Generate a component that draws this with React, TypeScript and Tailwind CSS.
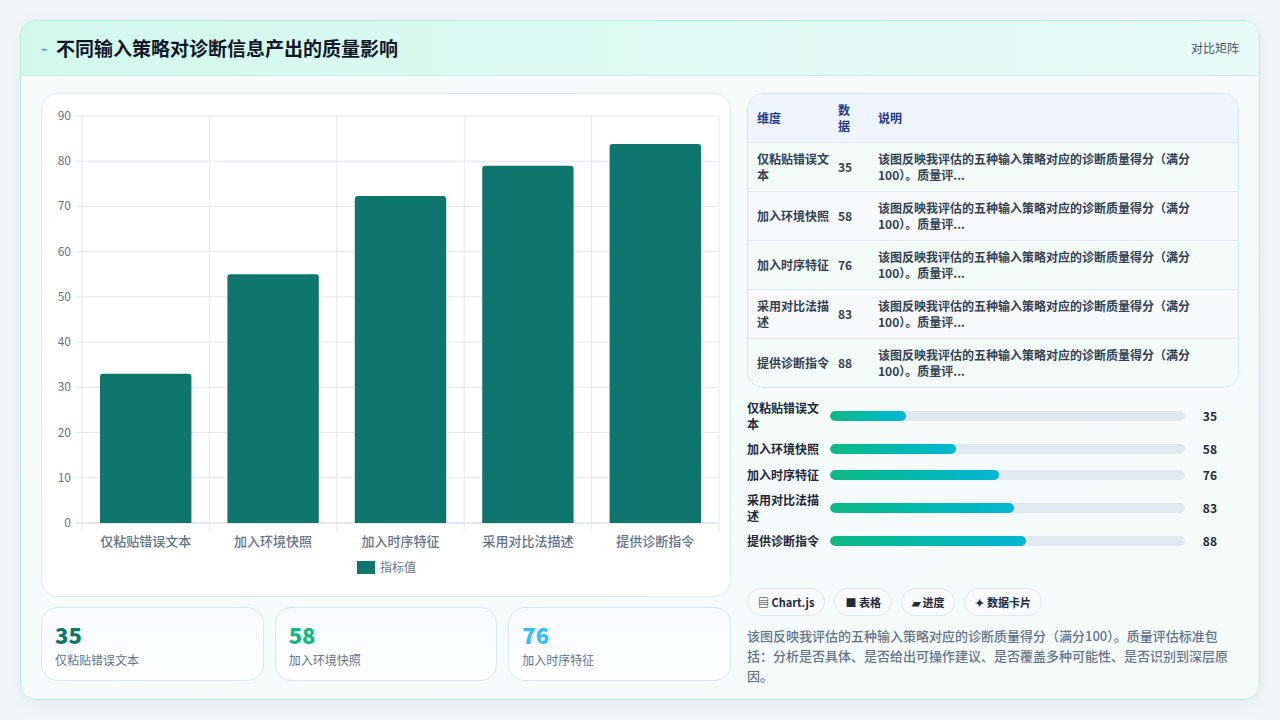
const font = { fontFamily: '"Noto Sans CJK SC", "Noto Sans", sans-serif' };

const bars = [
  { name: "仅粘贴错误文本", v: 35, h: 33, pct: 21.5 },
  { name: "加入环境快照", v: 58, h: 55, pct: 35.5 },
  { name: "加入时序特征", v: 76, h: 72.3, pct: 47.6 },
  { name: "采用对比法描述", v: 83, h: 79, pct: 51.9 },
  { name: "提供诊断指令", v: 88, h: 83.8, pct: 55.1 },
];

const rowNames = ["仅粘贴错误文\n本", "加入环境快照", "加入时序特征", "采用对比法描\n述", "提供诊断指令"];

function Chart() {
  const x0 = 40, x1 = 677, yTop = 22, yBot = 429;
  const sy = (yBot - yTop) / 90;
  const cw = (x1 - x0) / 5;
  return (
    <svg width="689" height="503" className="block">
      {[0, 10, 20, 30, 40, 50, 60, 70, 80, 90].map((t) => {
        const y = yBot - t * sy;
        return (
          <g key={t}>
            <line x1={x0 - 6} x2={x1} y1={y} y2={y} stroke={t === 0 ? "#cbd5e1" : "#e5e7eb"} />
            <text x={29} y={y + 4} textAnchor="end" fontSize="12" fill="#6b7280" style={font}>{t}</text>
          </g>
        );
      })}
      {[0, 1, 2, 3, 4, 5].map((i) => (
        <line key={i} x1={x0 + i * cw} x2={x0 + i * cw} y1={yTop} y2={yBot + 8} stroke="#e5e7eb" />
      ))}
      {bars.map((b, i) => {
        const bx = x0 + i * cw + 18;
        const y = yBot - b.h * sy;
        return (
          <g key={b.name}>
            <path d={`M${bx} ${yBot} V${y + 3} Q${bx} ${y} ${bx + 3} ${y} H${bx + cw - 39} Q${bx + cw - 36} ${y} ${bx + cw - 36} ${y + 3} V${yBot} Z`} fill="#0f766e" />
            <text x={x0 + i * cw + cw / 2} y={452} textAnchor="middle" fontSize="13" fill="#64748b" fontWeight="500" style={font}>{b.name}</text>
          </g>
        );
      })}
      <rect x={315} y={467} width={18} height={13} fill="#0f766e" />
      <text x={338} y={478} fontSize="12" fill="#64748b" style={font}>指标值</text>
    </svg>
  );
}

export default function App() {
  return (
    <div className="w-[1280px] h-[720px] bg-[#f3f6f8] p-5" style={font}>
      <div className="h-[680px] rounded-2xl border border-[#b8eedd] bg-gradient-to-br from-[#f7fcfb] to-[#f4fbf9] overflow-hidden flex flex-col shadow-[0_4px_16px_rgba(15,118,110,0.08)]">
        <div className="h-[55px] shrink-0 flex items-center justify-between px-5 bg-gradient-to-r from-[#d2f8ec] to-[#e8fbf6] border-b border-[#c9f0e4]">
          <div className="flex items-center gap-2">
            <span className="text-[11px] text-[#3b82f6]">⌁</span>
            <h1 className="text-[19px] font-bold text-[#0f172a]">不同输入策略对诊断信息产出的质量影响</h1>
          </div>
          <span className="text-[12px] text-[#475569]">对比矩阵</span>
        </div>
        <div className="flex gap-4 px-5 pt-[17px]">
          <div className="w-[690px] flex flex-col gap-[10px]">
            <div className="h-[504px] rounded-2xl border border-[#e2e8f0] bg-white overflow-hidden">
              <Chart />
            </div>
            <div className="flex gap-[11px]">
              {[
                { v: "35", n: "仅粘贴错误文本", c: "text-[#0f766e]" },
                { v: "58", n: "加入环境快照", c: "text-[#10b981]" },
                { v: "76", n: "加入时序特征", c: "text-[#38bdf8]" },
              ].map((s) => (
                <div key={s.v} className="flex-1 h-[74px] rounded-2xl border border-[#dbe6f3] bg-gradient-to-b from-[#f7faff] to-white px-[13px] pt-[12px]">
                  <div className={`text-[22px] font-extrabold leading-[28px] ${s.c}`}>{s.v}</div>
                  <div className="text-[12px] text-[#64748b] mt-[3px]">{s.n}</div>
                </div>
              ))}
            </div>
          </div>
          <div className="flex-1 flex flex-col">
            <div className="rounded-2xl border border-[#d6e2ef] overflow-hidden bg-white">
              <table className="w-full text-[12px] border-collapse">
                <thead>
                  <tr className="bg-[#eef5ff] h-[48px] text-[#1e3a8a] font-bold text-left">
                    <th className="pl-[9px] w-[90px] font-bold">维度</th>
                    <th className="w-[40px] font-bold leading-[16px]">数<br />据</th>
                    <th className="font-bold">说明</th>
                  </tr>
                </thead>
                <tbody>
                  {bars.map((b, i) => (
                    <tr key={b.name} className={`h-[49px] border-t border-[#e2e8f0] font-semibold text-[#334155] leading-[16px] ${i % 2 === 0 ? "bg-[#f3fbf8]" : "bg-[#f8fafc]"}`}>
                      <td className="pl-[9px] pr-1 whitespace-pre-line">{rowNames[i]}</td>
                      <td>{b.v}</td>
                      <td className="pr-4">该图反映我评估的五种输入策略对应的诊断质量得分（满分100）。质量评...</td>
                    </tr>
                  ))}
                </tbody>
              </table>
            </div>
            <div className="mt-[12px] flex flex-col gap-[8px] w-[470px]">
              {bars.map((b, i) => (
                <div key={b.name} className="flex items-center gap-2 min-h-[16px]">
                  <div className="w-[75px] text-[12px] font-semibold text-[#1e293b] leading-[16px] whitespace-pre-line">{rowNames[i]}</div>
                  <div className="flex-1 h-[10px] rounded-full bg-[#e2e8f0] overflow-hidden">
                    <div className="h-full rounded-full bg-gradient-to-r from-[#10b981] to-[#06b6d4]" style={{ width: `${b.pct}%` }} />
                  </div>
                  <div className="w-[24px] text-right text-[12px] font-bold text-[#1e293b]">{b.v}</div>
                </div>
              ))}
            </div>
            <div className="mt-[38px] flex gap-[9px] text-[11px] font-semibold text-[#1e293b]">
              {["▤ Chart.js", "■ 表格", "▰ 进度", "✦ 数据卡片"].map((c) => (
                <span key={c} className="h-[28px] px-[10px] rounded-full border border-[#e2e8f0] bg-[#f8fafc] flex items-center">{c}</span>
              ))}
            </div>
            <p className="mt-[10px] text-[13px] leading-[20px] text-[#64748b] font-medium">
              该图反映我评估的五种输入策略对应的诊断质量得分（满分100）。质量评估标准包括：分析是否具体、是否给出可操作建议、是否覆盖多种可能性、是否识别到深层原因。
            </p>
          </div>
        </div>
      </div>
    </div>
  );
}
